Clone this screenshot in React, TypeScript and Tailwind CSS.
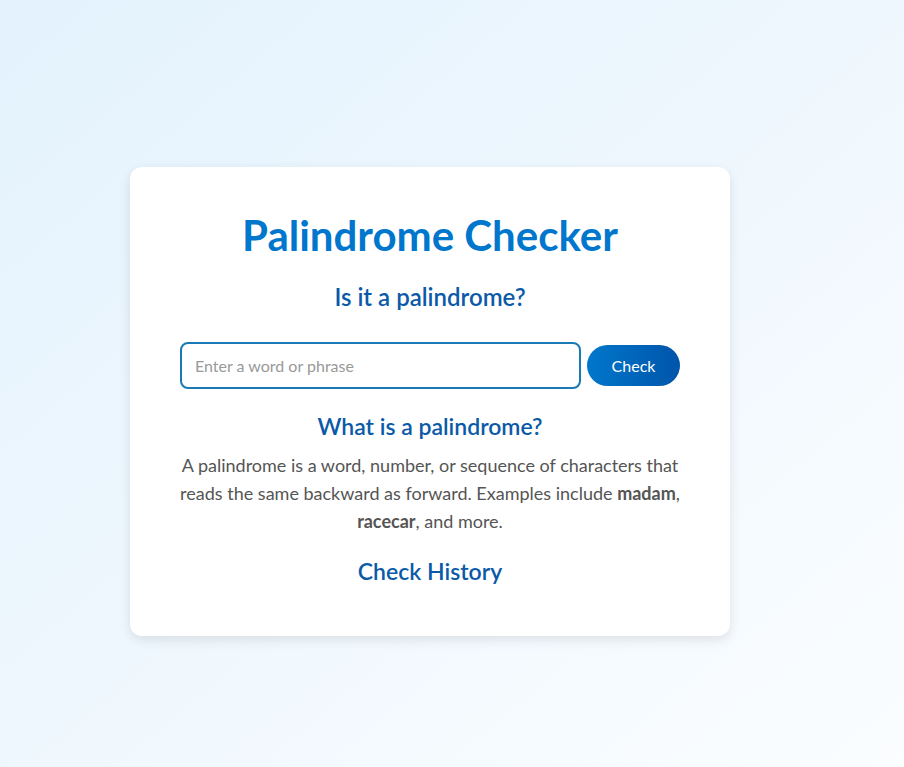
export default function App() {
  return (
    <div
      className="min-h-screen bg-gradient-to-br from-[#e3f2fd] to-[#fbfdff] pl-[130px] pt-[167px] pb-[130px]"
      style={{ fontFamily: "Lato, 'Noto Sans', sans-serif" }}
    >
      <div className="w-[600px] rounded-xl bg-white px-[50px] pt-[43px] pb-[50px] text-center shadow-[0_4px_12px_rgba(0,0,0,0.1)]">
        <h1 className="text-[42px] font-bold leading-[50px] text-[#0077cc]">
          Palindrome Checker
        </h1>
        <h2 className="mt-[21px] text-[24px] font-semibold leading-[31px] text-[#0b5aa8]">
          Is it a palindrome?
        </h2>

        <div className="mt-[30px] flex items-center gap-[6px]">
          <input
            type="text"
            placeholder="Enter a word or phrase"
            className="h-[47px] min-w-0 flex-1 rounded-lg border-2 border-[#1a7ab5] px-[13px] text-[16px] text-[#333] outline-none placeholder:text-[#999]"
          />
          <button className="h-[41px] w-[93px] shrink-0 rounded-full bg-gradient-to-r from-[#0077cc] to-[#0055aa] text-[16px] text-white">
            Check
          </button>
        </div>

        <h3 className="mt-[22px] text-[23px] font-semibold leading-[30px] text-[#0b5aa8]">
          What is a palindrome?
        </h3>
        <p className="mt-[10px] text-[18px] leading-[28px] text-[#555]">
          A palindrome is a word, number, or sequence of characters that reads
          the same backward as forward. Examples include <strong>madam</strong>,{" "}
          <strong>racecar</strong>, and more.
        </p>

        <h3 className="mt-[21px] text-[23px] font-semibold leading-[30px] text-[#0b5aa8]">
          Check History
        </h3>
      </div>
    </div>
  );
}
